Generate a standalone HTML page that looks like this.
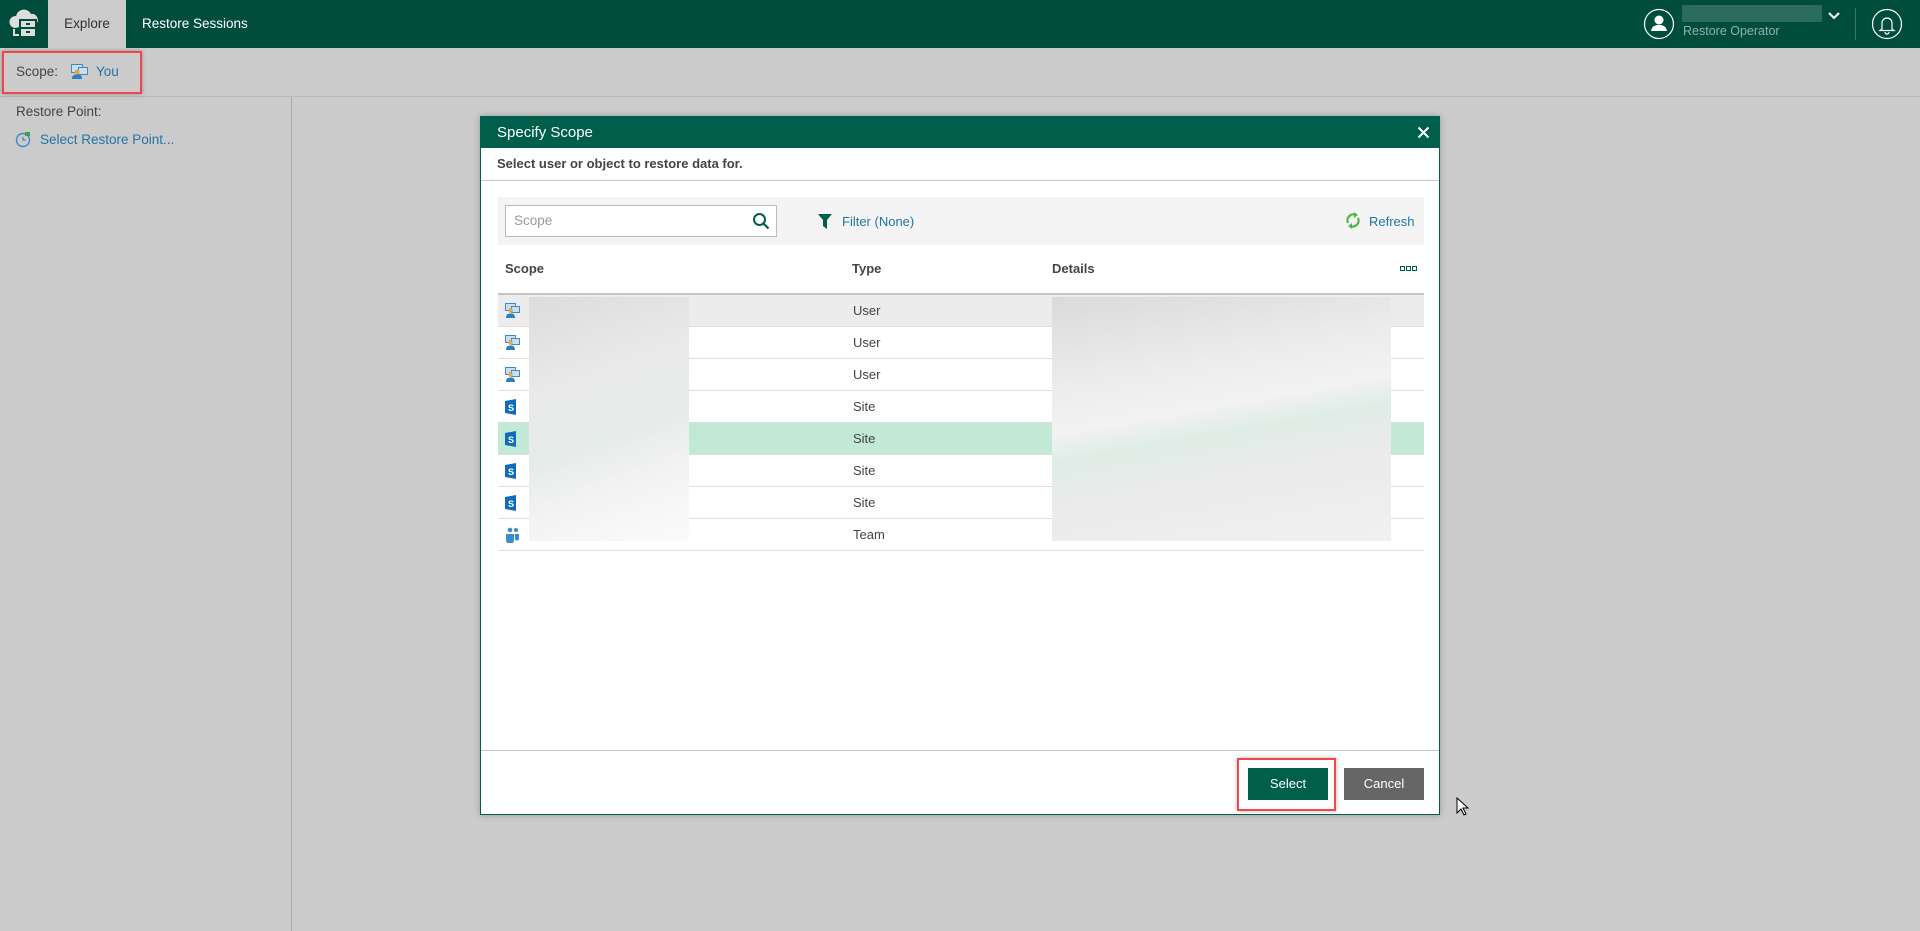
<!DOCTYPE html>
<html><head><meta charset="utf-8"><style>
*{box-sizing:border-box;margin:0;padding:0}
body{width:1920px;height:931px;background:#cbcbcb;font-family:"Liberation Sans",sans-serif;font-size:13px;color:#444;position:relative;overflow:hidden}
.abs{position:absolute}
.top{left:0;top:0;width:1920px;height:48px;background:#004d3c}
.tab{top:0;height:48px;line-height:48px;font-size:13.5px;color:#fff}
.dlg{left:480px;top:116px;width:960px;height:699px;background:#fff;border:1px solid #005f4b;box-shadow:0 0 6px rgba(0,0,0,.25)}
.row{left:17px;width:926px;height:32px;border-bottom:1px solid #ddd}
.row span{position:absolute;left:355px;top:8px;font-size:13px;color:#444}
.ic{position:absolute;left:7px;top:8px}
</style></head><body>
<div class="abs top"></div>
<svg class="abs" style="left:8px;top:8px" width="34" height="32" viewBox="0 0 34 32"><path d="M7 20a6 6 0 0 1 1-12 8 8 0 0 1 15-2 6 6 0 0 1 6 9" fill="#ddd"/><rect x="12" y="12" width="16" height="17" fill="#ddd" stroke="#004d3c" stroke-width="2"/><line x1="12" y1="20" x2="28" y2="20" stroke="#004d3c" stroke-width="2"/><rect x="18" y="15" width="4" height="2" fill="#004d3c"/><rect x="18" y="23" width="4" height="2" fill="#004d3c"/><path d="M6 21v6h5" stroke="#ddd" stroke-width="2" fill="none"/></svg>
<div class="abs tab" style="left:48px;width:78px;background:#ccc;color:#333;text-align:center">Explore</div>
<div class="abs tab" style="left:142px">Restore Sessions</div>
<svg class="abs" style="left:1643px;top:8px" width="32" height="32"><circle cx="16" cy="16" r="14.5" fill="none" stroke="#fff" stroke-width="1.2"/><circle cx="16" cy="12" r="4.5" fill="#fff"/><path d="M8 23c1-5 4-6 8-6s7 1 8 6z" fill="#fff"/></svg>
<div class="abs" style="left:1682px;top:5px;width:140px;height:17px;background:#2d6b5a"></div>
<div class="abs" style="left:1683px;top:24px;font-size:12.5px;color:#8fb3a8">Restore Operator</div>
<svg class="abs" style="left:1828px;top:12px" width="12" height="8"><path d="M1 1l5 5 5-5" stroke="#fff" stroke-width="2" fill="none"/></svg>
<div class="abs" style="left:1855px;top:8px;width:1px;height:32px;background:#3d7565"></div>
<svg class="abs" style="left:1871px;top:8px" width="32" height="32"><circle cx="16" cy="16" r="14.5" fill="none" stroke="#fff" stroke-width="1.2"/><path d="M11 21v-6a5 5 0 0 1 10 0v6l2 1.5H9z M14 24a2 2 0 0 0 4 0" fill="none" stroke="#fff" stroke-width="1.2"/></svg>
<div class="abs" style="left:0;top:96px;width:1920px;height:1px;background:#b9b9b9"></div>
<div class="abs" style="left:2px;top:51px;width:140px;height:43px;border:2px solid #f04848;box-shadow:0 0 4px rgba(0,0,0,.3)"></div>
<div class="abs" style="left:16px;top:64px;font-size:13.5px;color:#444">Scope:</div>
<svg class="abs" style="left:71px;top:64px" width="17" height="15"><rect x="0.5" y="0.5" width="11" height="8" fill="#cde" stroke="#3a8cc8"/><rect x="7.5" y="3.5" width="9" height="7" fill="#cde" stroke="#3a8cc8"/><circle cx="6" cy="8" r="2.5" fill="#e2a54a"/><path d="M1 15c0-4 2-4.5 5-4.5s5 .5 5 4.5z" fill="#2d7fbf"/></svg>
<div class="abs" style="left:96px;top:64px;font-size:13.5px;color:#2274a5">You</div>
<div class="abs" style="left:291px;top:97px;width:1px;height:834px;background:#aaa"></div>
<div class="abs" style="left:16px;top:104px;font-size:13.5px;color:#444">Restore Point:</div>
<svg class="abs" style="left:15px;top:131px" width="17" height="17"><circle cx="8" cy="9" r="6.5" fill="none" stroke="#3a8cc8" stroke-width="1.4"/><path d="M8 6v3h3" stroke="#3a8cc8" stroke-width="1.3" fill="none"/><rect x="10" y="1" width="5" height="4" fill="#3aa04a"/></svg>
<div class="abs" style="left:40px;top:132px;font-size:13.5px;color:#2274a5">Select Restore Point...</div>

<div class="abs dlg">
 <div class="abs" style="left:0;top:0;width:958px;height:31px;background:#005f4b;color:#fff;font-size:15px;line-height:31px;padding-left:16px">Specify Scope</div>
 <svg class="abs" style="left:936px;top:9px" width="13" height="13"><path d="M1.5 1.5l10 10M11.5 1.5l-10 10" stroke="#fff" stroke-width="2"/></svg>
 <div class="abs" style="left:16px;top:39px;font-size:13px;font-weight:bold;color:#444">Select user or object to restore data for.</div>
 <div class="abs" style="left:0;top:63px;width:958px;height:1px;background:#c8c8c8"></div>
 <div class="abs" style="left:17px;top:80px;width:926px;height:48px;background:#f4f4f4"></div>
 <div class="abs" style="left:24px;top:88px;width:272px;height:32px;background:#fff;border:1px solid #bbb;padding-left:8px;line-height:30px;color:#999;font-size:13.5px">Scope</div>
 <svg class="abs" style="left:271px;top:95px" width="18" height="18"><circle cx="7.5" cy="7.5" r="5.5" fill="none" stroke="#005f4b" stroke-width="2"/><path d="M11.5 11.5l5 5" stroke="#005f4b" stroke-width="2.2"/></svg>
 <svg class="abs" style="left:337px;top:97px" width="14" height="15"><path d="M0 0h14l-5 6v9l-4-3v-6z" fill="#005f4b"/></svg>
 <div class="abs" style="left:361px;top:97px;font-size:13px;color:#2274a5">Filter (None)</div>
 <svg class="abs" style="left:864px;top:95px" width="16" height="17"><path d="M3 11a6 6 0 0 1 8-8" stroke="#4cb848" stroke-width="2.2" fill="none"/><path d="M9 0l4 3-4 3z" fill="#4cb848"/><path d="M13 6a6 6 0 0 1-8 8" stroke="#4cb848" stroke-width="2.2" fill="none"/><path d="M7 17l-4-3 4-3z" fill="#4cb848"/></svg>
 <div class="abs" style="left:888px;top:97px;font-size:13px;color:#2274a5">Refresh</div>
 <div class="abs" style="left:24px;top:144px;font-weight:bold;font-size:13px;color:#444">Scope</div>
 <div class="abs" style="left:371px;top:144px;font-weight:bold;font-size:13px;color:#444">Type</div>
 <div class="abs" style="left:571px;top:144px;font-weight:bold;font-size:13px;color:#444">Details</div>
 <svg class="abs" style="left:919px;top:149px" width="18" height="6"><rect x=".5" y=".5" width="4" height="4" fill="none" stroke="#005f4b"/><rect x="6.5" y=".5" width="4" height="4" fill="none" stroke="#005f4b"/><rect x="12.5" y=".5" width="4" height="4" fill="none" stroke="#005f4b"/></svg>
 <div class="abs" style="left:17px;top:176px;width:926px;height:2px;background:#c4c4c4"></div>

 <div class="abs row" style="top:178px;background:#ececec"><svg class="ic" width="15" height="15"><rect x="0.5" y="0.5" width="10" height="7" fill="#cde" stroke="#3a8cc8"/><rect x="6.5" y="3.5" width="8" height="6" fill="#cde" stroke="#3a8cc8"/><circle cx="5.5" cy="7.5" r="2.3" fill="#e2a54a"/><path d="M1 15c0-4 2-4.5 4.5-4.5s4.5.5 4.5 4.5z" fill="#2d7fbf"/></svg><span>User</span></div>
 <div class="abs row" style="top:210px"><svg class="ic" width="15" height="15"><rect x="0.5" y="0.5" width="10" height="7" fill="#cde" stroke="#3a8cc8"/><rect x="6.5" y="3.5" width="8" height="6" fill="#cde" stroke="#3a8cc8"/><circle cx="5.5" cy="7.5" r="2.3" fill="#e2a54a"/><path d="M1 15c0-4 2-4.5 4.5-4.5s4.5.5 4.5 4.5z" fill="#2d7fbf"/></svg><span>User</span></div>
 <div class="abs row" style="top:242px"><svg class="ic" width="15" height="15"><rect x="0.5" y="0.5" width="10" height="7" fill="#cde" stroke="#3a8cc8"/><rect x="6.5" y="3.5" width="8" height="6" fill="#cde" stroke="#3a8cc8"/><circle cx="5.5" cy="7.5" r="2.3" fill="#e2a54a"/><path d="M1 15c0-4 2-4.5 4.5-4.5s4.5.5 4.5 4.5z" fill="#2d7fbf"/></svg><span>User</span></div>
 <div class="abs row" style="top:274px"><svg class="ic" width="12" height="16"><path d="M0 2l11-2v16l-11-2z" fill="#0f6cbd"/><text x="3" y="12" font-size="9" fill="#fff" font-family="Liberation Sans" font-weight="bold">S</text></svg><span>Site</span></div>
 <div class="abs row" style="top:306px;background:#c2e8d6"><svg class="ic" width="12" height="16"><path d="M0 2l11-2v16l-11-2z" fill="#0f6cbd"/><text x="3" y="12" font-size="9" fill="#fff" font-family="Liberation Sans" font-weight="bold">S</text></svg><span>Site</span></div>
 <div class="abs row" style="top:338px"><svg class="ic" width="12" height="16"><path d="M0 2l11-2v16l-11-2z" fill="#0f6cbd"/><text x="3" y="12" font-size="9" fill="#fff" font-family="Liberation Sans" font-weight="bold">S</text></svg><span>Site</span></div>
 <div class="abs row" style="top:370px"><svg class="ic" width="12" height="16"><path d="M0 2l11-2v16l-11-2z" fill="#0f6cbd"/><text x="3" y="12" font-size="9" fill="#fff" font-family="Liberation Sans" font-weight="bold">S</text></svg><span>Site</span></div>
 <div class="abs row" style="top:402px"><svg class="ic" width="15" height="16"><circle cx="11" cy="3" r="2" fill="#3a8cc8"/><circle cx="5" cy="3" r="2.3" fill="#3a8cc8"/><path d="M1 7h8v6a4 4 0 0 1-8 0z" fill="#3a8cc8"/><path d="M10 7h4v4a2 2 0 0 1-4 1z" fill="#3a8cc8"/></svg><span>Team</span></div>

 <div class="abs" style="left:48px;top:180px;width:160px;height:244px;background:linear-gradient(160deg,#dcdcdc 0%,#eaeaea 35%,#e5ebe8 55%,#f3f3f3 75%,#fbfbfb 100%)"></div>
 <div class="abs" style="left:571px;top:180px;width:339px;height:244px;background:linear-gradient(170deg,#dadada 0%,#ececec 30%,#f2f2f2 45%,#dfece6 55%,#ebebeb 70%,#f0f0f0 100%)"></div>

 <div class="abs" style="left:0;top:633px;width:958px;height:1px;background:#c8c8c8"></div>
 <div class="abs" style="left:756px;top:641px;width:99px;height:53px;border:2px solid #f04848;box-shadow:0 0 4px rgba(0,0,0,.3)"></div>
 <div class="abs" style="left:767px;top:651px;width:80px;height:32px;background:#005f4b;color:#fff;text-align:center;line-height:32px;font-size:13px">Select</div>
 <div class="abs" style="left:863px;top:651px;width:80px;height:32px;background:#666;color:#fff;text-align:center;line-height:32px;font-size:13px">Cancel</div>
</div>
<svg class="abs" style="left:1456px;top:797px" width="13" height="20"><path d="M1 1v15l4-4 3 6 2-1-3-6h5z" fill="#fff" stroke="#000"/></svg>
</body></html>
